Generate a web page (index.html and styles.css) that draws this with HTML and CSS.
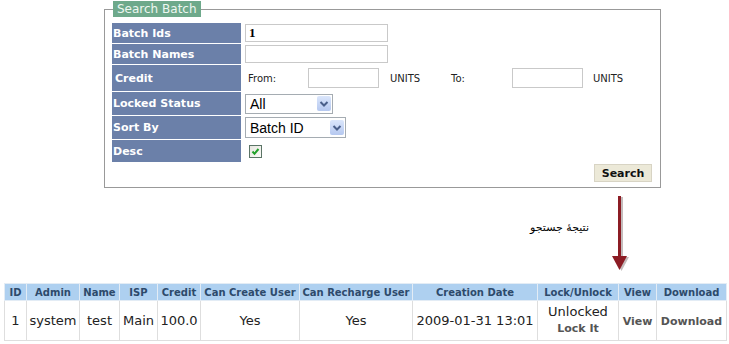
FILE: index.html
```html
<!DOCTYPE html>
<html lang="en">
<head>
<meta charset="utf-8">
<title>Search Batch</title>
<link rel="stylesheet" href="styles.css">
</head>
<body>
<div class="page">
  <fieldset class="search">
    <legend>Search Batch</legend>
    <div class="form">
      <div class="lbl">Batch Ids</div>
      <div class="val"><input class="field wide ids" type="text" value="1"></div>

      <div class="lbl">Batch Names</div>
      <div class="val"><input class="field wide" type="text" value=""></div>

      <div class="lbl lbl-credit">Credit</div>
      <div class="val credit">
        <span class="from">From:</span>
        <input class="field small" type="text" value="">
        <span class="units">UNITS</span>
        <span class="to">To:</span>
        <input class="field small" type="text" value="">
        <span class="units last">UNITS</span>
      </div>

      <div class="lbl">Locked Status</div>
      <div class="val">
        <span class="select sel-status"><span class="sel-text">All</span><span class="sel-btn"><svg width="10" height="8" viewBox="0 0 10 8"><polyline points="1.5,2 5,5.5 8.5,2" fill="none" stroke="#4a5f8a" stroke-width="2"/></svg></span></span>
      </div>

      <div class="lbl">Sort By</div>
      <div class="val">
        <span class="select sel-sort"><span class="sel-text">Batch ID</span><span class="sel-btn"><svg width="10" height="8" viewBox="0 0 10 8"><polyline points="1.5,2 5,5.5 8.5,2" fill="none" stroke="#4a5f8a" stroke-width="2"/></svg></span></span>
      </div>

      <div class="lbl">Desc</div>
      <div class="val">
        <span class="check"><svg width="11" height="11" viewBox="0 0 11 11"><polyline points="2.5,5.5 4.5,7.8 8.5,3" fill="none" stroke="#22a12a" stroke-width="2"/></svg></span>
      </div>
    </div>
    <div class="actions"><button class="btn" type="button">Search</button></div>
  </fieldset>

  <div class="note">
    <span class="note-text" dir="rtl">نتیجهٔ جستجو</span>
    <svg class="arrow" width="22" height="80" viewBox="0 0 22 80">
      <g class="arrow-shadow" transform="translate(2,1)">
        <rect x="9" y="1" width="3" height="62"/>
        <polygon points="3,61 18,61 10.5,75"/>
      </g>
      <g class="arrow-body">
        <rect x="9" y="1" width="3" height="62"/>
        <polygon points="3,61 18,61 10.5,75"/>
      </g>
    </svg>
  </div>

  <table class="results">
    <colgroup>
      <col class="c-id"><col class="c-admin"><col class="c-name"><col class="c-isp"><col class="c-credit"><col class="c-create"><col class="c-recharge"><col class="c-date"><col class="c-lock"><col class="c-view"><col class="c-dl">
    </colgroup>
    <thead>
      <tr>
        <th>ID</th><th>Admin</th><th>Name</th><th>ISP</th><th>Credit</th><th>Can Create User</th><th>Can Recharge User</th><th>Creation Date</th><th>Lock/Unlock</th><th>View</th><th>Download</th>
      </tr>
    </thead>
    <tbody>
      <tr>
        <td>1</td><td>system</td><td>test</td><td>Main</td><td>100.0</td><td>Yes</td><td>Yes</td><td>2009-01-31 13:01</td>
        <td class="lock">Unlocked<br><a class="link" href="#">Lock It</a></td>
        <td><a class="link" href="#">View</a></td>
        <td><a class="link" href="#">Download</a></td>
      </tr>
    </tbody>
  </table>
</div>
</body>
</html>
```
FILE: styles.css
```css
html, body {
  margin: 0;
  padding: 0;
  background: #fff;
}
body {
  font-family: "DejaVu Sans", Verdana, sans-serif;
  color: #222;
}
.page {
  width: 729px;
  padding-top: 1px;
}

/* ---------- search fieldset ---------- */
.search {
  margin: 0 0 0 104px;
  width: 557px;
  box-sizing: border-box;
  border: 1px solid #999;
  padding: 6px 7px 5px 7px;
}
.search legend {
  margin-left: 1px;
  padding: 0 4px;
  background: #6ea98b;
  color: #eef7f1;
  font-size: 12px;
  line-height: 16px;
}
.form {
  display: grid;
  grid-template-columns: 129px 1fr;
  grid-template-rows: 20px 20px 26px 23px 23px 22px;
  gap: 1px 1px;
}
.lbl {
  background: #6b80a9;
  color: #fff;
  font-weight: bold;
  font-size: 11px;
  padding-left: 1px;
  display: flex;
  align-items: center;
}
.lbl-credit {
  padding-left: 3px;
}
.val {
  display: flex;
  align-items: center;
  padding-left: 3px;
  font-size: 10px;
}
.field {
  box-sizing: border-box;
  border: 1px solid #c9c9c9;
  margin: 0;
  padding: 0 3px;
  background: #fff;
  outline: none;
}
.wide {
  width: 143px;
  height: 18px;
}
.ids {
  font-family: "Liberation Serif", serif;
  font-weight: bold;
  font-size: 13px;
  color: #000;
}
.small {
  width: 71px;
  height: 20px;
}
.credit .from {
  width: 63px;
  padding-left: 3px;
  box-sizing: border-box;
}
.credit .units {
  margin-left: 11px;
  width: 61px;
}
.credit .units.last {
  margin-left: 10px;
  width: auto;
}
.credit .to {
  width: 61px;
}

.select {
  display: inline-flex;
  align-items: center;
  justify-content: space-between;
  box-sizing: border-box;
  height: 20px;
  border: 1px solid #a5acb2;
  background: #fff;
  font-family: "Liberation Sans", Arial, sans-serif;
  font-size: 14px;
  color: #000;
  padding-left: 4px;
}
.sel-status { width: 88px; }
.sel-sort { width: 101px; height: 21px; }
.sel-btn {
  width: 14px;
  height: 15px;
  margin-right: 1px;
  border-radius: 2px;
  background: linear-gradient(#dbe6fb, #b5c8f0);
  display: flex;
  align-items: center;
  justify-content: center;
}
.check {
  margin-left: 4px;
  width: 13px;
  height: 13px;
  box-sizing: border-box;
  border: 1px solid #5b7466;
  background: linear-gradient(135deg, #e6e6df, #fbfbf8);
  display: flex;
  align-items: center;
  justify-content: center;
}

.actions {
  display: flex;
  justify-content: flex-end;
  margin-top: 2px;
}
.btn {
  width: 58px;
  height: 18px;
  margin: 0 1px 0 0;
  padding: 0;
  border: 1px solid #d8d4c4;
  background: #ece9d8;
  font-family: "DejaVu Sans", Verdana, sans-serif;
  font-weight: bold;
  font-size: 11px;
  color: #111;
}

/* ---------- note + arrow ---------- */
.note {
  height: 95px;
  display: flex;
  align-items: flex-start;
}
.note-text {
  margin-left: 529px;
  margin-top: 32px;
  width: 60px;
  text-align: right;
  font-size: 11px;
  line-height: 16px;
  color: #000;
}
.arrow {
  margin-left: 20px;
  margin-top: 7px;
}
.arrow-shadow {
  fill: #c4bcbc;
}
.arrow-body {
  fill: #8c1c24;
}

/* ---------- results table ---------- */
.results {
  margin-left: 4px;
  width: 722px;
  border-collapse: collapse;
  table-layout: fixed;
}
.c-id { width: 22px; }
.c-admin { width: 53px; }
.c-name { width: 40px; }
.c-isp { width: 38px; }
.c-credit { width: 43px; }
.c-create { width: 99px; }
.c-recharge { width: 113px; }
.c-date { width: 125px; }
.c-lock { width: 81px; }
.c-view { width: 38px; }
.c-dl { width: 70px; }

.results th {
  background: #aed0f0;
  color: #2d4a6b;
  font-size: 10px;
  font-weight: bold;
  height: 16px;
  padding: 0;
  border: 1px solid #e3ecf5;
  white-space: nowrap;
  text-align: center;
}
.results td {
  height: 39px;
  padding: 0;
  border: 1px solid #dedede;
  text-align: center;
  font-size: 13px;
  color: #222;
  white-space: nowrap;
}
.results td.lock {
  line-height: 16px;
}
.link {
  font-weight: bold;
  font-size: 11px;
  color: #555;
  text-decoration: none;
}
```
